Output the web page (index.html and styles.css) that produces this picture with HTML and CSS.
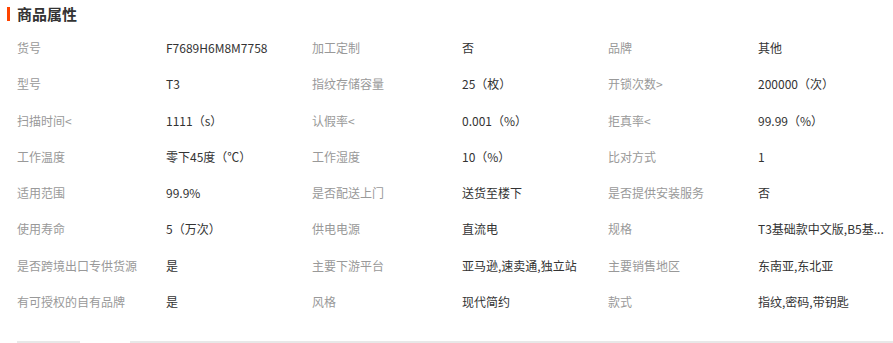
FILE: index.html
```html
<!DOCTYPE html>
<html lang="zh-CN">
<head>
<meta charset="utf-8">
<title>商品属性</title>
<link rel="stylesheet" href="styles.css">
</head>
<body>
<div class="attrs">
  <div class="head"><span class="bar"></span><h2 class="title">商品属性</h2></div>
  <div class="grid">
    <div class="k">货号</div><div class="v">F7689H6M8M7758</div>
    <div class="k">加工定制</div><div class="v">否</div>
    <div class="k">品牌</div><div class="v">其他</div>

    <div class="k">型号</div><div class="v">T3</div>
    <div class="k">指纹存储容量</div><div class="v">25（枚）</div>
    <div class="k">开锁次数&gt;</div><div class="v">200000（次）</div>

    <div class="k">扫描时间&lt;</div><div class="v">1111（s）</div>
    <div class="k">认假率&lt;</div><div class="v">0.001（%）</div>
    <div class="k">拒真率&lt;</div><div class="v">99.99（%）</div>

    <div class="k">工作温度</div><div class="v">零下45度（℃）</div>
    <div class="k">工作湿度</div><div class="v">10（%）</div>
    <div class="k">比对方式</div><div class="v">1</div>

    <div class="k">适用范围</div><div class="v">99.9%</div>
    <div class="k">是否配送上门</div><div class="v">送货至楼下</div>
    <div class="k">是否提供安装服务</div><div class="v">否</div>

    <div class="k">使用寿命</div><div class="v">5（万次）</div>
    <div class="k">供电电源</div><div class="v">直流电</div>
    <div class="k">规格</div><div class="v" title="T3基础款中文版,B5基础款中文版">T3基础款中文版,B5基...</div>

    <div class="k">是否跨境出口专供货源</div><div class="v">是</div>
    <div class="k">主要下游平台</div><div class="v">亚马逊,速卖通,独立站</div>
    <div class="k">主要销售地区</div><div class="v">东南亚,东北亚</div>

    <div class="k">有可授权的自有品牌</div><div class="v">是</div>
    <div class="k">风格</div><div class="v">现代简约</div>
    <div class="k">款式</div><div class="v">指纹,密码,带钥匙</div>
  </div>
  <div class="tabs"><span class="seg seg-a"></span><span class="seg seg-b"></span></div>
</div>
</body>
</html>
```
FILE: styles.css
```css
html, body {
  margin: 0;
  padding: 0;
  background: #fff;
}
body {
  font-family: "Noto Sans CJK SC", "Microsoft YaHei", sans-serif;
  font-size: 12px;
  color: #333;
  width: 893px;
  overflow: hidden;
}
.head {
  height: 30px;
  display: flex;
  align-items: center;
  padding-left: 7px;
  padding-bottom: 2px;
  box-sizing: border-box;
}
.bar {
  width: 3px;
  height: 14px;
  background: #ff4400;
  margin-right: 7px;
}
.title {
  margin: 0;
  font-size: 15px;
  font-weight: bold;
  color: #333;
  line-height: 20px;
}
.grid {
  display: grid;
  grid-template-columns: 149px 146px 150px 146px 150px 135px;
  grid-auto-rows: 36.28px;
  padding-left: 17px;
}
.k, .v {
  white-space: nowrap;
  line-height: 36.28px;
}
.k {
  color: #999;
}
.v {
  color: #333;
}
.tabs {
  margin-top: 20.7px;
  display: flex;
  gap: 50px;
  padding-left: 17px;
}
.seg {
  height: 2px;
  background: #e8e8e8;
}
.seg-a {
  width: 63px;
}
.seg-b {
  flex: 1;
}
```
